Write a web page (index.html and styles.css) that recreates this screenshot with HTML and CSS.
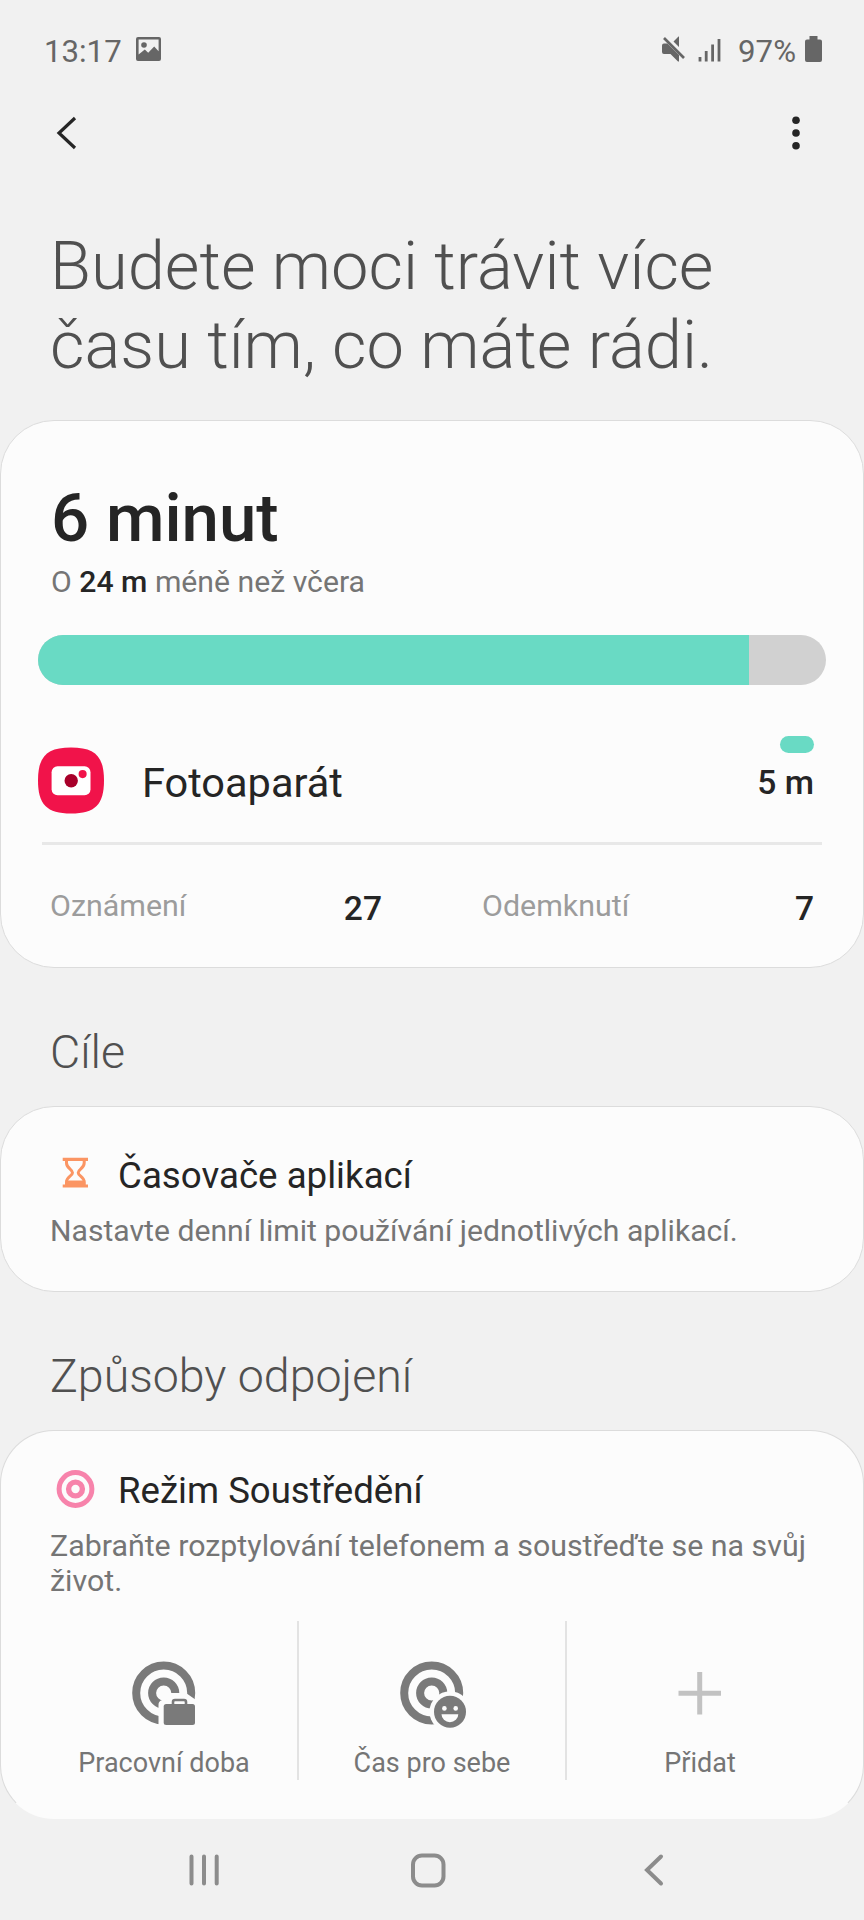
FILE: index.html
```html
<!DOCTYPE html>
<html lang="cs">
<head>
<meta charset="utf-8">
<title>Digitální rovnováha</title>
<link rel="stylesheet" href="styles.css">
</head>
<body>
<div class="screen">
  <div class="status">
    <span class="clock">13:17</span>
    <svg class="picture" width="25" height="24" viewBox="0 0 25 24"><path fill="#666" fill-rule="evenodd" d="M2 0h21a2 2 0 0 1 2 2v20a2 2 0 0 1-2 2H2a2 2 0 0 1-2-2V2a2 2 0 0 1 2-2zM2.600 2.600V17.600l6.200-5 3.400 3.200 6-6.200 4.400 4.600V2.600z"/><circle cx="8" cy="8" r="2.800" fill="#666"/></svg>
    <span class="spacer"></span>
    <svg class="mute" width="24" height="26" viewBox="0 0 24 26"><g fill="#666"><path d="M0 9.500a2 2 0 0 1 2-2h3.500L17 19v6.500h-1L8.500 18H2a2 2 0 0 1-2-2zM11.500 5.500l5-5h.5V11z"/></g><path d="M2 2l20 20" stroke="#666" stroke-width="2.600"/></svg>
    <svg class="signal" width="23" height="24" viewBox="0 0 23 24"><path d="M2 19v4.500M8.200 13v10.500M14.600 6.500v17M21 1v22.500" stroke="#666" stroke-width="2.800" stroke-linecap="butt"/></svg>
    <span class="percent">97%</span>
    <svg class="battery" width="17" height="26" viewBox="0 0 17 26"><path fill="#666" d="M4.500 0h8v3.500H15a2 2 0 0 1 2 2V24a2 2 0 0 1-2 2H2a2 2 0 0 1-2-2V5.500a2 2 0 0 1 2-2h2.500z"/></svg>
  </div>
  <div class="appbar">
    <svg width="22" height="34" viewBox="0 0 22 34"><path d="M19 2L3 17l16 15" fill="none" stroke="#252525" stroke-width="3.200"/></svg>
    <svg width="8" height="34" viewBox="0 0 8 34"><g fill="#252525"><circle cx="4" cy="4.200" r="3.800"/><circle cx="4" cy="17" r="3.800"/><circle cx="4" cy="29.800" r="3.800"/></g></svg>
  </div>
  <h1 class="headline">Budete moci trávit více<br>času tím, co máte rádi.</h1>

  <section class="card usage">
    <div class="total">6 minut</div>
    <div class="compare">O <b>24 m</b> méně než včera</div>
    <div class="bar"><div class="bar-fill"></div></div>
    <div class="app">
      <svg class="camera" width="66" height="67" viewBox="0 0 67 67"><path fill="#f1134a" d="M33.500 0C58 0 67 9 67 33.500S58 67 33.500 67 0 58 0 33.500 9 0 33.500 0z"/><rect x="13.800" y="19" width="39.500" height="29.500" rx="6" fill="#fff"/><circle cx="33.700" cy="33.700" r="6.800" fill="#a8002a"/><circle cx="45.300" cy="27" r="4.100" fill="#f1134a"/></svg>
      <span class="app-name">Fotoaparát</span>
      <div class="app-time"><span class="pill"></span><span>5 m</span></div>
    </div>
    <div class="stats">
      <div class="stat"><span class="stat-name">Oznámení</span><span class="stat-value">27</span></div>
      <div class="stat"><span class="stat-name">Odemknutí</span><span class="stat-value">7</span></div>
    </div>
  </section>

  <h2 class="section">Cíle</h2>
  <section class="card timers">
    <div class="row">
      <svg width="50" height="40" viewBox="0 0 50 40"><g fill="#fb9563"><path d="M12.700 4.700h25.300v3.200H12.700zM12.700 31.400h25.300v3.200H12.700zM15.500 27.500h19.700v4.500H15.500z"/></g><path d="M16.500 7v3c0 5.500 6 6.500 6 9.700s-6 4.200-6 9.300V32M34.200 7v3c0 5.500-6 6.500-6 9.700s6 4.200 6 9.300V32" fill="none" stroke="#fb9563" stroke-width="3"/></svg>
      <span class="row-title">Časovače aplikací</span>
    </div>
    <p class="desc">Nastavte denní limit používání jednotlivých aplikací.</p>
  </section>

  <h2 class="section ways">Způsoby odpojení</h2>
  <section class="card focus">
    <div class="row">
      <svg width="50" height="40" viewBox="0 0 50 40"><g fill="none" stroke="#f783ab"><circle cx="25.500" cy="20" r="16.400" stroke-width="5"/><circle cx="25.500" cy="20" r="6.900" stroke-width="5.400"/></g></svg>
      <span class="row-title">Režim Soustředění</span>
    </div>
    <p class="desc">Zabraňte rozptylování telefonem a soustřeďte se na svůj život.</p>
    <div class="modes">
      <div class="mode">
        <svg width="64" height="68" viewBox="0 0 64 68"><g fill="none" stroke="#7a7a7a"><circle cx="31.700" cy="32" r="27.500" stroke-width="8"/><circle cx="31.700" cy="32" r="11.600" stroke-width="8"/></g><path fill="#fcfcfc" d="M26.500 68V44a5 5 0 0 1 4-5l4.500-1v-6H54l10 7v29z"/><rect x="31.700" y="43" width="31.300" height="21" rx="2.500" fill="#7a7a7a"/><path d="M41 43.500v-2.500a2 2 0 0 1 2-2h9a2 2 0 0 1 2 2V43.500" fill="none" stroke="#7a7a7a" stroke-width="2.600"/></svg>
        <span>Pracovní doba</span>
      </div>
      <div class="mode">
        <svg width="64" height="68" viewBox="0 0 64 68"><g fill="none" stroke="#7a7a7a"><circle cx="31.700" cy="32" r="27.500" stroke-width="8"/><circle cx="31.700" cy="32" r="11.600" stroke-width="8"/></g><circle cx="50" cy="50.700" r="20.500" fill="#fcfcfc"/><circle cx="50" cy="50.700" r="16" fill="#7a7a7a"/><g fill="#fcfcfc"><circle cx="44.400" cy="47.400" r="2.300"/><circle cx="55.700" cy="47.400" r="2.300"/><path d="M41.500 53.200h16.800a8.400 8 0 0 1-16.800 0z"/></g></svg>
        <span>Čas pro sebe</span>
      </div>
      <div class="mode">
        <svg width="64" height="68" viewBox="0 0 64 68"><path d="M31.700 11v42.500M10.500 32.200h42.500" stroke="#c2c2c2" stroke-width="5"/></svg>
        <span>Přidat</span>
      </div>
    </div>
  </section>

  <nav class="nav">
    <svg width="32" height="34" viewBox="0 0 32 34"><path d="M3.500 3.500v27M16 3.500v27M28.700 3.500v27" stroke="#8c8c8c" stroke-width="4" stroke-linecap="round"/></svg>
    <svg class="home" width="36" height="36" viewBox="0 0 36 36"><rect x="3" y="2.500" width="30.500" height="30" rx="9" fill="none" stroke="#8c8c8c" stroke-width="4"/></svg>
    <svg width="22" height="34" viewBox="0 0 22 34"><path d="M18 3.500L4 17l14 13.500" fill="none" stroke="#8c8c8c" stroke-width="4" stroke-linecap="round"/></svg>
  </nav>
</div>
</body>
</html>
```
FILE: styles.css
```css
* { box-sizing: border-box; margin: 0; padding: 0; }
body { background: #f1f1f1; font-family: Roboto, sans-serif; color: #252525; }
svg { display: block; flex: none; overflow: visible; }
.screen { width: 864px; height: 1920px; overflow: hidden; display: flex; flex-direction: column; }

.status { height: 96px; padding: 8px 42px 0 44px; display: flex; align-items: center; color: #666; font-size: 31.200px; line-height: 36px; }
.spacer { flex: 1; }
.picture { margin-left: 14px; margin-bottom: 6px; }
.mute { margin-right: 12px; margin-bottom: 6px; }
.signal { margin-right: 17px; margin-bottom: 5px; }
.battery { margin-left: 9px; margin-bottom: 7px; }

.appbar { height: 74px; padding: 0 64px 0 56px; display: flex; justify-content: space-between; align-items: center; }

.headline { margin-top: 57px; padding-left: 50px; font-size: 66.850px; line-height: 79px; font-weight: 300; color: #505050; white-space: nowrap; }

.card { background: #fcfcfc; border: 1px solid #dcdcdc; border-radius: 54px; flex: none; }
.usage { margin-top: 35px; height: 548px; padding: 58px 37px 0; }
.total { padding-left: 13px; font-size: 67.200px; line-height: 79px; font-weight: 500; }
.compare { padding-left: 13px; margin-top: 6px; font-size: 30.200px; line-height: 36px; color: #757575; }
.compare b { font-weight: 500; color: #252525; }
.bar { margin-top: 35px; height: 50px; border-radius: 25px; background: #d1d1d1; overflow: hidden; }
.bar-fill { width: 711px; height: 100%; background: #69dac4; }
.app { height: 160px; margin: 0 4px; display: flex; align-items: flex-start; border-bottom: 3px solid #e8e8e8; }
.camera { margin: 62px 0 0 -4px; }
.app-name { margin: 74px 0 0 38px; font-size: 41.500px; line-height: 48px; }
.app-time { margin: 51px 8px 0 auto; display: flex; flex-direction: column; align-items: flex-end; font-size: 33.600px; line-height: 40px; font-weight: 500; }
.pill { width: 34px; height: 17px; border-radius: 9px; background: #69dac4; margin-bottom: 10px; }
.stats { display: grid; grid-template-columns: 332px 332px; column-gap: 100px; padding: 43px 0 0 12px; }
.stat { display: flex; justify-content: space-between; line-height: 36px; }
.stat-name { font-size: 30.400px; color: #9c9c9c; }
.stat-value { font-size: 33.600px; font-weight: 500; padding-top: 3px; }

.section { font-size: 46.500px; line-height: 54px; font-weight: 300; color: #505050; padding-left: 50px; margin-top: 57px; }
.timers { margin-top: 27px; height: 186px; padding: 44px 49px 0; }
.row { display: flex; align-items: center; height: 44px; }
.row-title { font-size: 36.700px; line-height: 44px; margin-left: 18px; padding-top: 5px; }
.desc { font-size: 30.150px; line-height: 35px; color: #757575; margin-top: 18px; }

.ways { margin-top: 57px; }
.focus { margin-top: 27px; height: 389px; padding: 36px 29px 0; border-bottom-color: transparent; }
.focus .row-title { padding-top: 4px; font-size: 36.600px; }
.focus .row, .focus .desc { margin-left: 20px; }
.focus .desc { width: 775px; margin-top: 17px; font-size: 30.350px; }
.modes { display: grid; grid-template-columns: repeat(3, 268px); margin-top: 23px; height: 159px; }
.mode { display: flex; flex-direction: column; align-items: center; padding-top: 40px; font-size: 27px; line-height: 32px; color: #757575; }
.mode + .mode { box-shadow: -1px 0 #e3e3e3, inset 1px 0 #e3e3e3; }
.mode span { margin-top: 18px; }

.nav { flex: 1; display: flex; justify-content: space-between; padding: 34px 199px 0 188px; }
.home { margin-left: -7px; }
```
